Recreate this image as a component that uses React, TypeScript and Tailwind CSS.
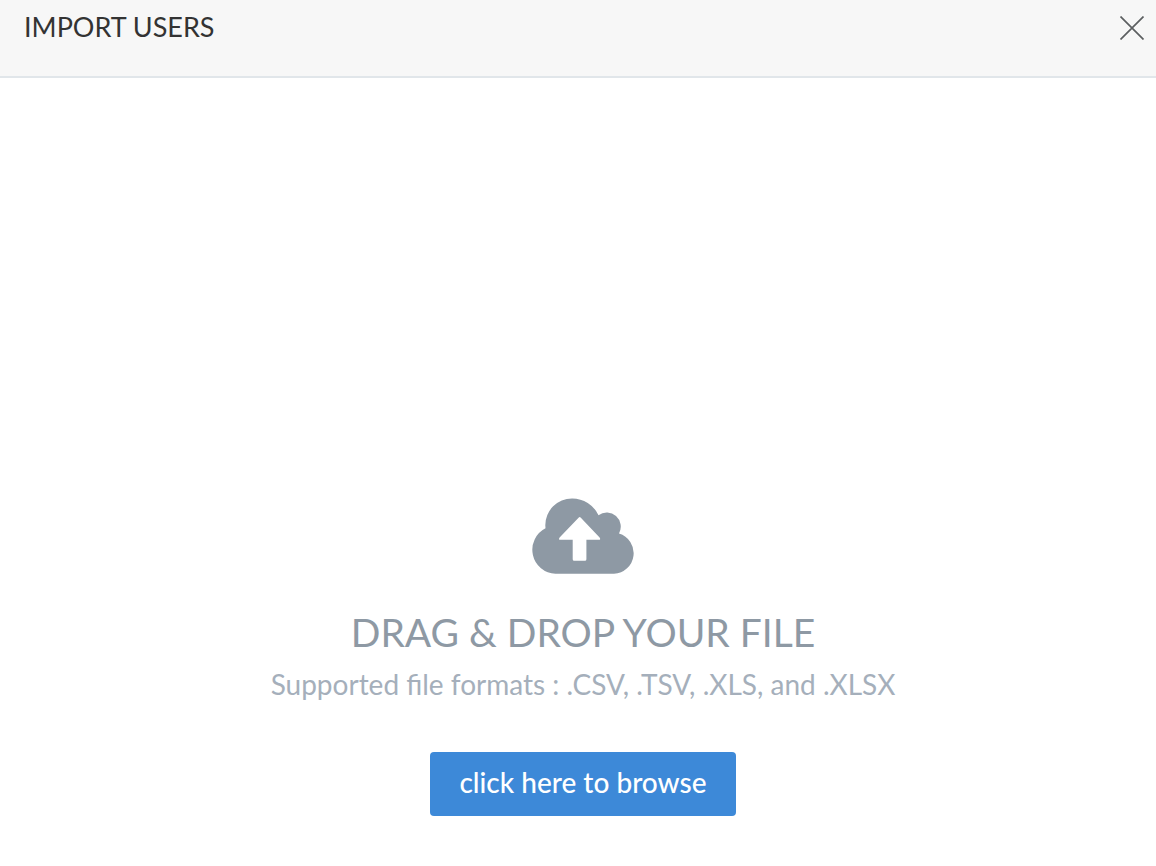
function CloudUploadIcon() {
  return (
    <svg viewBox="0 0 104 76" className="h-[76px] w-[104px] text-[#8e99a4]" fill="currentColor" aria-hidden="true">
      <path d="M24.5 75.7A24 24 0 0 1 14.5 30.3L14.3 27.2A26.8 26.8 0 0 1 41 0.4A28.8 28.8 0 0 1 67.5 17.3A14 14 0 0 1 88 35.4A20.6 20.6 0 0 1 83 75.7Z" />
      <path
        fill="#ffffff"
        d="M47.8 19.4Q48.7 18.6 49.6 19.4L68.6 39.4Q70 41.7 68 41.7H55.4V61.2Q55.4 62.7 53.9 62.7H43.2Q41.7 62.7 41.7 61.2V41.7H29.2Q27.2 41.7 28.6 39.4Z"
      />
    </svg>
  )
}

export default function App() {
  return (
    <main className="flex min-h-screen flex-col bg-white font-['Lato',sans-serif]">
      <header className="flex items-start justify-between border-b-2 border-[#e1e6ea] bg-[#f7f7f7] pt-2 pr-3 pb-[30px] pl-6">
        <h1 className="text-[27px] leading-[38px] text-[#333333]">IMPORT USERS</h1>
        <button type="button" aria-label="Close" className="pt-2 text-[#5c5f61]">
          <svg viewBox="0 0 24 24" className="size-6" fill="none" stroke="currentColor" strokeWidth="1.7">
            <path d="M0.5 0.5L23.5 23.5M23.5 0.5L0.5 23.5" />
          </svg>
        </button>
      </header>

      <section className="flex flex-1 flex-col items-center justify-end pb-[50px] pl-[10px] text-center">
        <CloudUploadIcon />
        <h2 className="mt-[34px] text-[39px] leading-12 text-[#8e99a4]">DRAG &amp; DROP YOUR FILE</h2>
        <p className="mt-2 text-[28px] leading-10 text-[#a5afbb]">
          Supported file formats : .CSV, .TSV, .XLS, and .XLSX
        </p>
        <button type="button" className="mt-12 h-16 rounded-sm bg-[#3d89d8] px-[29px] pb-1 text-[28px] font-medium text-white">
          click here to browse
        </button>
      </section>
    </main>
  )
}
